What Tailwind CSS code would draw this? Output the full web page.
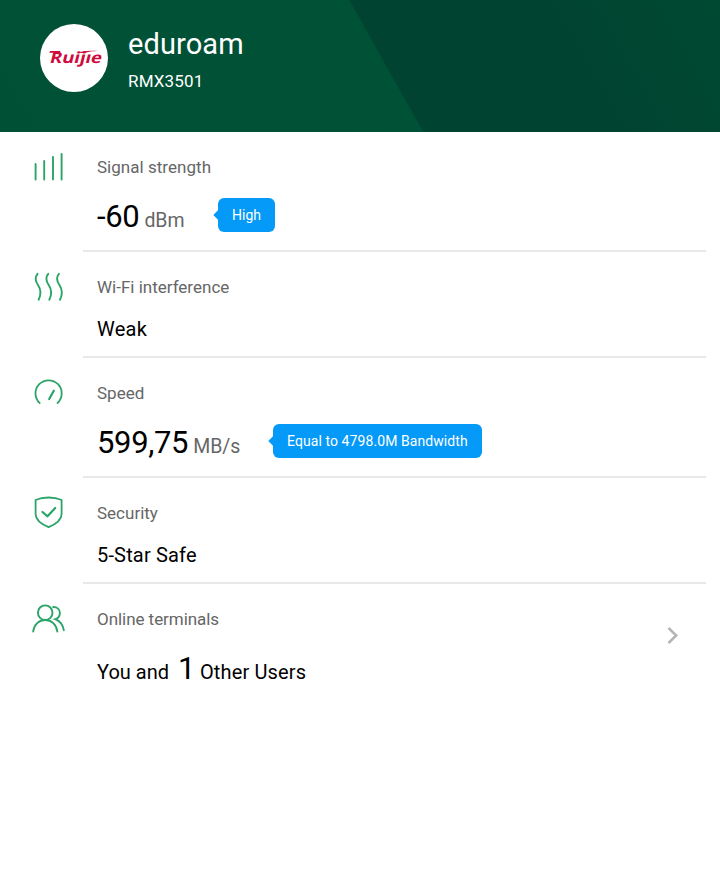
<!DOCTYPE html>
<html lang="en">
<head>
  <meta charset="UTF-8">
  <meta name="viewport" content="width=device-width, initial-scale=1.0">
  <title>eduroam</title>
  <script src="https://cdn.jsdelivr.net/npm/@tailwindcss/browser@4"></script>
</head>
<body class="min-h-screen bg-white font-['Roboto',sans-serif] text-black">

  <!-- Network header -->
  <header class="flex h-[132px] items-start bg-[linear-gradient(60.7deg,#005035_0%,#005236_53.2%,#004330_53.4%,#004330_75%,#004932_100%)] pl-10 pt-6 text-white">
    <div class="flex size-[68px] items-center justify-center rounded-full bg-white">
      <svg class="h-6 w-14" viewBox="0 0 56 24" fill="#cf0a3c">
        <text transform="translate(3 16.500) skewX(-14)" font-family="Open Sans, sans-serif" font-size="15.500" font-weight="700" textLength="52" lengthAdjust="spacingAndGlyphs">Ruijıe</text>
        <path d="M4.200 5h10v1.700H3.200zM31 6.700c6-2 13-2.500 22-1.700-7 .1-11 .8-15 2.100z"/>
      </svg>
    </div>
    <div class="ml-5">
      <h1 class="text-[29px] leading-10 tracking-[0.1px]">eduroam</h1>
      <p class="mt-[5px] text-[17px] leading-6 tracking-[0.15px]">RMX3501</p>
    </div>
  </header>

  <main>
    <!-- Signal strength -->
    <section class="flex h-[120px]">
      <div class="w-[83px] shrink-0 pl-[30px] pt-4">
        <svg class="size-9" viewBox="0 0 36 36" fill="none" stroke="#2aa567" stroke-width="1.9" stroke-linecap="round">
          <path d="M5.600 16v15.500M14.200 13v18.500M23 9v22.500M31.600 6v25.500"/>
        </svg>
      </div>
      <div class="mr-3.5 flex-1 border-b-2 border-[#e8e8e8] pl-3.5 pt-[23px]">
        <h2 class="text-[17px] leading-6 tracking-[0.03px] text-[#666]">Signal strength</h2>
        <div class="mt-[18px] flex items-center">
          <p class="w-[121px] whitespace-nowrap text-[31px] leading-10 tracking-[-0.35px]">-60<span class="ml-[5px] text-[19.5px] tracking-normal text-[#666]">dBm</span></p>
          <div class="relative mb-1 h-[34px] -translate-y-0.5 rounded-md bg-[#0599f8] px-3.5 text-sm leading-[34px] text-white">
            <span class="absolute -left-[3px] top-[13px] size-2 rotate-45 bg-[#0599f8]"></span>
            <span class="relative">High</span>
          </div>
        </div>
      </div>
    </section>

    <!-- Interference -->
    <section class="flex h-[106px]">
      <div class="w-[83px] shrink-0 pl-[30px] pt-4">
        <svg class="size-9" viewBox="0 0 36 36" fill="none" stroke="#2aa567" stroke-width="1.9" stroke-linecap="round">
          <path d="M7.500 5.800C4.500 9.500 5.300 13 8 17s4 8 .6 14.700"/>
          <path d="M18.200 5.800c-3 3.700-2.200 7.200.5 11.200s4 8 .6 14.700"/>
          <path d="M28.900 5.800c-3 3.700-2.200 7.200.5 11.200s4 8 .6 14.700"/>
        </svg>
      </div>
      <div class="mr-3.5 flex-1 border-b-2 border-[#e8e8e8] pl-3.5 pt-[23px]">
        <h2 class="text-[17px] leading-6 text-[#666]">Wi-Fi interference</h2>
        <p class="mt-4 text-xl leading-7 tracking-[0.25px]">Weak</p>
      </div>
    </section>

    <!-- Speed -->
    <section class="flex h-[120px]">
      <div class="w-[83px] shrink-0 pl-[30px] pt-4">
        <svg class="size-9" viewBox="0 0 36 36" fill="none" stroke="#2aa567" stroke-width="1.8" stroke-linecap="round">
          <path d="M9.700 29A13.100 13.100 0 1 1 27.500 29"/>
          <path d="M19.200 25l4.600-8.300" stroke-width="2.200"/>
        </svg>
      </div>
      <div class="mr-3.5 flex-1 border-b-2 border-[#e8e8e8] pl-3.5 pt-[23px]">
        <h2 class="text-[17px] leading-6 text-[#666]">Speed</h2>
        <div class="mt-[18px] flex items-center">
          <p class="w-[176px] whitespace-nowrap text-[31px] leading-10 tracking-[-0.35px]">599,75<span class="ml-[5px] text-[19.5px] tracking-normal text-[#666]">MB/s</span></p>
          <div class="relative mb-1 h-[34px] -translate-y-0.5 rounded-md bg-[#0599f8] px-3.5 text-sm leading-[34px] tracking-[0.08px] text-white">
            <span class="absolute -left-[3px] top-[13px] size-2 rotate-45 bg-[#0599f8]"></span>
            <span class="relative">Equal to 4798.0M Bandwidth</span>
          </div>
        </div>
      </div>
    </section>

    <!-- Security -->
    <section class="flex h-[106px]">
      <div class="w-[83px] shrink-0 pl-[30px] pt-4">
        <svg class="size-9" viewBox="0 0 36 36" fill="none" stroke="#2aa567" stroke-width="1.8" stroke-linecap="round" stroke-linejoin="round">
          <path d="M18.600 3.500c4.500 0 9 .7 13 2.500v14c0 6-5.500 10-13 13.200C11 30 5.600 26 5.600 20V6c4-1.800 8.500-2.500 13-2.500z"/>
          <path d="M12.500 18l5 4.300 7.700-8.300" stroke-width="2.200"/>
        </svg>
      </div>
      <div class="mr-3.5 flex-1 border-b-2 border-[#e8e8e8] pl-3.5 pt-[23px]">
        <h2 class="text-[17px] leading-6 text-[#666]">Security</h2>
        <p class="mt-4 text-xl leading-7 tracking-[0.17px]">5-Star Safe</p>
      </div>
    </section>

    <!-- Online terminals -->
    <section class="flex h-[120px]">
      <div class="w-[83px] shrink-0 pl-[30px] pt-4">
        <svg class="size-9" viewBox="0 0 36 36" fill="none" stroke="#2aa567" stroke-width="1.900" stroke-linecap="round">
          <circle cx="15.200" cy="12.700" r="7.300"/>
          <path d="M3.200 31.500C4 24.500 9 20 15.200 20s11.300 4.500 12.100 11.500"/>
          <path d="M23.200 7c4 0 6.700 2.500 6.700 6 0 2.800-1.700 5.200-4.600 6.200 4.500 1.800 7.500 5.300 8.500 11"/>
        </svg>
      </div>
      <div class="flex-1 pl-3.5 pt-[23px]">
        <h2 class="text-[17px] leading-6 tracking-[-0.05px] text-[#666]">Online terminals</h2>
        <p class="mt-[18px] text-xl leading-10">You and<span class="ml-[9px] mr-[4.5px] text-[31px]">1</span><span class="tracking-[0.15px]">Other Users</span></p>
      </div>
      <svg class="mr-9 mt-[41px] h-5 w-5" viewBox="0 0 20 20" fill="none" stroke="#b4b4b4" stroke-width="2.500">
        <path d="M4.500 3l7.700 7.500L4.500 18"/>
      </svg>
    </section>
  </main>

</body>
</html>
